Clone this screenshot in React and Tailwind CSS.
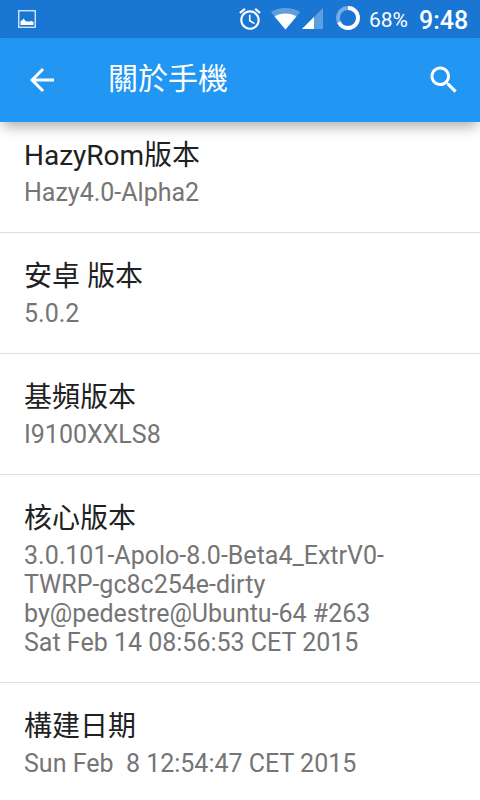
import React from "react";

const items = [
  { title: "HazyRom版本", summary: ["Hazy4.0-Alpha2"] },
  { title: "安卓 版本", summary: ["5.0.2"] },
  { title: "基頻版本", summary: ["I9100XXLS8"] },
  {
    title: "核心版本",
    summary: [
      "3.0.101-Apolo-8.0-Beta4_ExtrV0-",
      "TWRP-gc8c254e-dirty",
      "by@pedestre@Ubuntu-64 #263",
      "Sat Feb 14 08:56:53 CET 2015",
    ],
  },
  { title: "構建日期", summary: ["Sun Feb  8 12:54:47 CET 2015"] },
];

const PictureIcon = () => (
  <svg width="18" height="18" viewBox="0 0 18 18" className="ml-[18px]">
    <rect x="0.75" y="0.75" width="16.5" height="16.5" fill="none" stroke="#e3eefa" strokeWidth="1.3" />
    <path d="M2.5 15V11L4 10.500 5.500 8.500 8 11.500l1.500-.3 2 .5 1.500-.9L15.500 12v3z" fill="#fff" />
  </svg>
);

const AlarmIcon = () => (
  <svg width="26" height="26" viewBox="0 0 24 24" fill="#fff" className="ml-auto">
    <path d="M22 5.72l-4.6-3.86-1.29 1.53 4.6 3.86L22 5.72zM7.88 3.39L6.6 1.86 2 5.71l1.29 1.53 4.59-3.85zM12.5 8H11v6l4.75 2.85.75-1.23-4-2.37V8zM12 4c-4.97 0-9 4.03-9 9s4.02 9 9 9c4.97 0 9-4.03 9-9s-4.03-9-9-9zm0 16c-3.87 0-7-3.13-7-7s3.13-7 7-7 7 3.13 7 7-3.13 7-7 7z" />
  </svg>
);

const WifiIcon = () => (
  <svg width="29" height="22" viewBox="0 0 29 22" className="ml-[8px] -mt-px">
    <path d="M14.5 21.5L0 4.2C4 1.4 9 0 14.5 0S25 1.4 29 4.2z" fill="#fff" opacity="0.3" />
    <path d="M14.5 21.5L3.6 8.4C6.5 6.6 10.2 5.4 14.5 5.4s8 1.2 10.9 3z" fill="#fff" />
  </svg>
);

const SignalIcon = () => (
  <svg width="21" height="21" viewBox="0 0 21 21" className="ml-[2px] -mt-px">
    <path d="M0 21L21 0v21z" fill="#fff" opacity="0.3" />
    <path d="M0 21L12 9v12z" fill="#fff" />
  </svg>
);

const BatteryRing = () => (
  <svg width="24" height="24" viewBox="0 0 24 24" className="ml-[13px] -mt-[2px]">
    <g fill="none" strokeWidth="3.8" transform="rotate(-90 12 12)">
      <circle cx="12" cy="12" r="10" stroke="#fff" opacity="0.4" />
      <circle cx="12" cy="12" r="10" stroke="#fff" pathLength="100" strokeDasharray="68 32" />
    </g>
  </svg>
);

const App = () => {
  return (
    <div className="w-[480px] h-[800px] overflow-hidden bg-white flex flex-col font-['Roboto','Noto_Sans_CJK_TC',sans-serif]">
      <div className="h-[38px] shrink-0 bg-[#1976d2] flex items-center text-white">
        <PictureIcon />
        <AlarmIcon />
        <WifiIcon />
        <SignalIcon />
        <BatteryRing />
        <span className="ml-[9px] w-[50px] text-[21px] leading-[38px] pt-[2px] whitespace-nowrap">68%</span>
        <span className="w-[49px] mr-[12px] text-[25px] leading-[38px] pt-[4px] font-medium whitespace-nowrap">9:48</span>
      </div>

      <header className="relative z-10 h-[84px] shrink-0 bg-[#2196f3] flex items-center px-6 text-white shadow-[0_8px_12px_-3px_rgba(0,0,0,0.3)]">
        <svg width="36" height="36" viewBox="0 0 24 24" fill="#fff">
          <path d="M20 11H7.83l5.59-5.59L12 4l-8 8 8 8 1.41-1.41L7.83 13H20v-2z" />
        </svg>
        <h1 className="ml-[48px] pb-[2px] text-[30px] leading-[40px]">關於手機</h1>
        <svg width="36" height="36" viewBox="0 0 24 24" fill="#fff" className="ml-auto -mr-[6px]">
          <path d="M15.5 14h-.79l-.28-.27C15.41 12.59 16 11.11 16 9.5 16 5.91 13.09 3 9.5 3S3 5.91 3 9.5 5.91 16 9.5 16c1.61 0 3.09-.59 4.23-1.57l.27.28v.79l5 4.99L20.49 19l-4.99-5zm-6 0C7.01 14 5 11.99 5 9.5S7.01 5 9.5 5 14 7.01 14 9.5 11.99 14 9.5 14z" />
        </svg>
      </header>

      <ul className="-mt-[10px]">
        {items.map((item) => (
          <li key={item.title} className="px-6 pt-6 pb-[25px] border-b border-[#dedede]">
            <h2 className="h-[42px] text-[28px] leading-[40px] text-[#212121]">{item.title}</h2>
            {item.summary.map((line) => (
              <p key={line} className="text-[25px] leading-[29px] text-[#757575] whitespace-pre">
                {line}
              </p>
            ))}
          </li>
        ))}
      </ul>
    </div>
  );
};

export default App;
